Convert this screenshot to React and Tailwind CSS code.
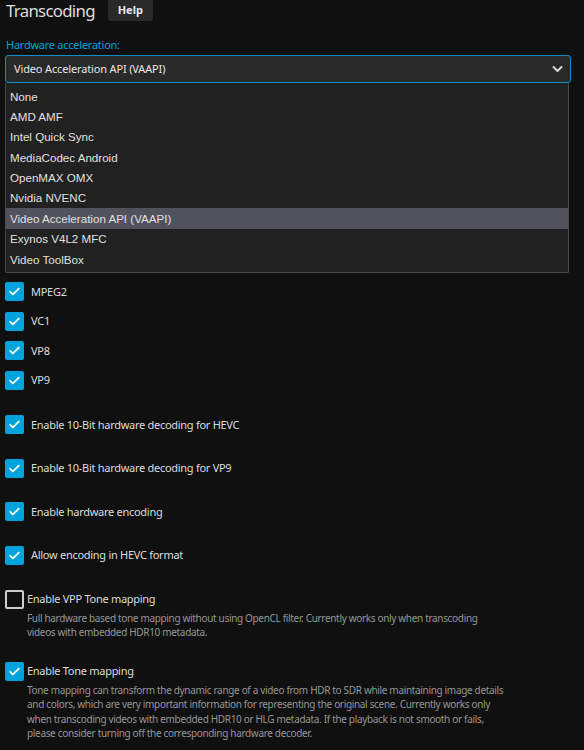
import React from "react";

const NOTO = { fontFamily: '"Noto Sans", "Open Sans", sans-serif' };

function Check({ checked }) {
  if (!checked) {
    return <div className="w-[19px] h-[19px] shrink-0 rounded-[2px] border-2 border-[#cfcfcf]" />;
  }
  return (
    <div className="w-[19px] h-[19px] shrink-0 rounded-[2px] bg-[#00a4dc] flex items-center justify-center">
      <svg width="13" height="13" viewBox="0 0 24 24" fill="none" stroke="#ffffff" strokeWidth="3.2" strokeLinecap="round" strokeLinejoin="round">
        <path d="M4 12.5l5 5L20 6.5" />
      </svg>
    </div>
  );
}

const options = [
  "None",
  "AMD AMF",
  "Intel Quick Sync",
  "MediaCodec Android",
  "OpenMAX OMX",
  "Nvidia NVENC",
  "Video Acceleration API (VAAPI)",
  "Exynos V4L2 MFC",
  "Video ToolBox",
];

export default function App() {
  return (
    <div className="w-[584px] h-[750px] bg-[#101010] overflow-hidden text-[#dddddd]" style={NOTO}>
      <div className="pl-[5px]">
        {/* header */}
        <div className="flex items-start h-[22px]">
          <div className="text-[16.8px] leading-[22px] tracking-[-0.7px] text-[#dddddd] pl-[1px]">Transcoding</div>
          <div className="ml-[13px] w-[45px] h-[21px] bg-[#292929] rounded-b-[3px] flex items-center justify-center text-[11px] font-bold text-[#e8e8e8]">
            Help
          </div>
        </div>
        {/* label */}
        <div className="mt-[15px] h-[18px] text-[11px] leading-[16px] tracking-[-0.25px] text-[#00a4dc] pl-[1px]">Hardware acceleration:</div>
        {/* select */}
        <div className="relative w-[566px]">
          <div className="h-[28px] border border-[#0f8fc9] rounded-[3px] bg-[#292929] flex items-center pl-[8px] pr-[7px] text-[11px] tracking-[-0.15px] text-[#e6e6e6]">
            <span className="flex-1">Video Acceleration API (VAAPI)</span>
            <svg width="11" height="8" viewBox="0 0 11 8" fill="none" stroke="#d9d9d9" strokeWidth="2" strokeLinecap="round" strokeLinejoin="round">
              <path d="M1.5 2l4 4 4-4" />
            </svg>
          </div>
          {/* area covered by the opened list */}
          <div className="h-[194px]" />
          {/* open list overlay */}
          <div
            className="absolute left-0 top-[28px] w-[564px] h-[190px] bg-[#212121] border border-[#4a4a4a] border-t-0 rounded-b-[2px] py-[3px]"
            style={{ fontFamily: '"Liberation Sans", Arial, sans-serif' }}
          >
            {options.map((o) => (
              <div
                key={o}
                className={
                  "h-[20.4px] flex items-center pl-[4px] text-[11.6px] text-[#e0e0e0] " +
                  (o === "Video Acceleration API (VAAPI)" ? "bg-[#52525d]" : "")
                }
              >
                {o}
              </div>
            ))}
          </div>
        </div>

        {/* codec rows */}
        <div className="flex flex-col">
          {["MPEG2", "VC1", "VP8", "VP9"].map((c) => (
            <div key={c} className="h-[29.5px] flex items-center">
              <Check checked />
              <span className="ml-[7px] text-[11px] tracking-[-0.28px] text-[#dddddd]">{c}</span>
            </div>
          ))}
        </div>

        <div className="mt-[8px] flex flex-col">
          {[
            "Enable 10-Bit hardware decoding for HEVC",
            "Enable 10-Bit hardware decoding for VP9",
            "Enable hardware encoding",
            "Allow encoding in HEVC format",
          ].map((c) => (
            <div key={c} className="h-[43.5px] flex items-center">
              <Check checked />
              <span className="ml-[7px] text-[11px] tracking-[-0.28px] text-[#dddddd]">{c}</span>
            </div>
          ))}
        </div>

        {/* VPP */}
        <div className="mt-[13px]">
          <div className="flex items-center h-[18px]">
            <Check checked={false} />
            <span className="ml-[3px] text-[11px] tracking-[-0.28px] text-[#dddddd]">Enable VPP Tone mapping</span>
          </div>
          <div className="mt-[3px] ml-[22px] w-[468px] text-[10px] leading-[14px] tracking-[-0.33px] text-[#969696]">
            Full hardware based tone mapping without using OpenCL filter. Currently works only when transcoding videos with embedded HDR10 metadata.
          </div>
        </div>

        {/* Tone mapping */}
        <div className="mt-[23px]">
          <div className="flex items-center h-[18px]">
            <Check checked />
            <span className="ml-[3px] text-[11px] tracking-[-0.28px] text-[#dddddd]">Enable Tone mapping</span>
          </div>
          <div className="mt-[3px] ml-[22px] w-[482px] text-[10px] leading-[14.3px] tracking-[-0.33px] text-[#969696]">
            Tone mapping can transform the dynamic range of a video from HDR to SDR while maintaining image details and colors, which are very important information for representing the original scene. Currently works only when transcoding videos with embedded HDR10 or HLG metadata. If the playback is not smooth or fails, please consider turning off the corresponding hardware decoder.
          </div>
        </div>
      </div>
    </div>
  );
}
